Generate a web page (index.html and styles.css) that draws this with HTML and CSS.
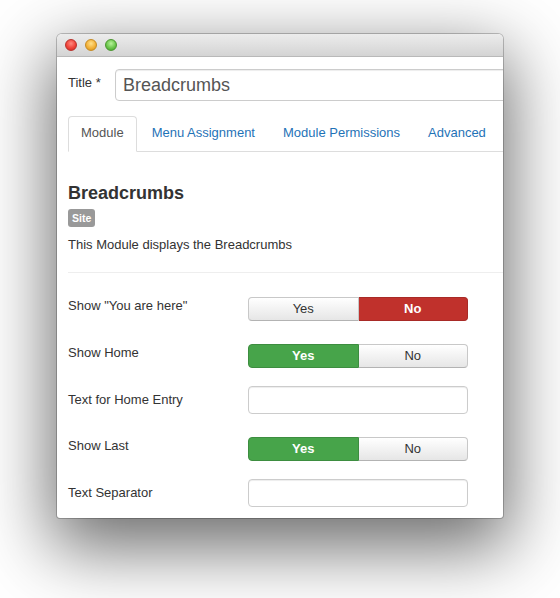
FILE: index.html
```html
<!DOCTYPE html>
<html>
<head>
<meta charset="utf-8">
<link rel="stylesheet" href="styles.css">
</head>
<body>
<div class="stage">
  <div class="window">
    <div class="titlebar">
      <span class="light red"></span>
      <span class="light yellow"></span>
      <span class="light green"></span>
    </div>
    <div class="content">
      <div class="title-row">
        <label class="title-label">Title *</label>
        <div class="title-input">Breadcrumbs</div>
      </div>
      <ul class="tabs">
        <li class="tab active">Module</li>
        <li class="tab">Menu Assignment</li>
        <li class="tab">Module Permissions</li>
        <li class="tab">Advanced</li>
      </ul>
      <div class="pane">
        <h3 class="heading">Breadcrumbs</h3>
        <div class="badge-wrap"><span class="badge">Site</span></div>
        <p class="desc">This Module displays the Breadcrumbs</p>
        <div class="rule"></div>
        <div class="form">
          <div class="row">
            <div class="label">Show "You are here"</div>
            <div class="btn-group">
              <span class="btn">Yes</span>
              <span class="btn btn-danger">No</span>
            </div>
          </div>
          <div class="row">
            <div class="label">Show Home</div>
            <div class="btn-group">
              <span class="btn btn-success">Yes</span>
              <span class="btn">No</span>
            </div>
          </div>
          <div class="row tight">
            <div class="label">Text for Home Entry</div>
            <div class="text-input"></div>
          </div>
          <div class="row">
            <div class="label">Show Last</div>
            <div class="btn-group">
              <span class="btn btn-success">Yes</span>
              <span class="btn">No</span>
            </div>
          </div>
          <div class="row">
            <div class="label">Text Separator</div>
            <div class="text-input"></div>
          </div>
        </div>
      </div>
    </div>
  </div>
</div>
</body>
</html>
```

FILE: styles.css
```css
html, body {
  margin: 0;
  padding: 0;
  background: #ffffff;
}
body {
  width: 560px;
  height: 598px;
  overflow: hidden;
  font-family: "Liberation Sans", Arial, sans-serif;
  font-size: 13px;
  color: #333333;
}
.stage {
  padding: 34px 0 0 57px;
}
.window {
  width: 446px;
  height: 484px;
  background: #ffffff;
  border-radius: 5px 5px 3px 3px;
  overflow: hidden;
  box-shadow: 0 24px 70px 6px rgba(0, 0, 0, 0.58), 0 0 0 1px rgba(0, 0, 0, 0.22);
}
.titlebar {
  height: 22px;
  border-bottom: 1px solid #b9b9b9;
  background: linear-gradient(#ececec, #d4d4d4);
  display: flex;
  align-items: center;
  gap: 8px;
  padding-left: 8px;
}
.light {
  width: 12px;
  height: 12px;
  border-radius: 50%;
  box-sizing: border-box;
}
.light.red {
  background: radial-gradient(circle at 50% 35%, #ff8a80 0%, #f0443a 55%, #c42a22 100%);
  border: 1px solid #b8302a;
}
.light.yellow {
  background: radial-gradient(circle at 50% 35%, #ffe08a 0%, #f3b23a 55%, #d08f18 100%);
  border: 1px solid #c58a22;
}
.light.green {
  background: radial-gradient(circle at 50% 35%, #b7f29a 0%, #6cc74c 55%, #3f9a28 100%);
  border: 1px solid #4a952f;
}
.content {
  padding: 12px 0 0 11px;
  width: 600px;
}
.title-row {
  display: flex;
  align-items: flex-start;
}
.title-label {
  width: 47px;
  padding-top: 5px;
  line-height: 18px;
  font-size: 13px;
  color: #333;
}
.title-input {
  width: 420px;
  height: 32px;
  box-sizing: border-box;
  border: 1px solid #cccccc;
  border-radius: 4px;
  box-shadow: inset 0 1px 1px rgba(0, 0, 0, 0.075);
  padding: 0 7px;
  font-size: 18px;
  line-height: 30px;
  color: #555555;
}
.tabs {
  list-style: none;
  margin: 15px 0 0 0;
  padding: 0;
  display: flex;
  border-bottom: 1px solid #dddddd;
}
.tab {
  padding: 7px 12px 9px;
  line-height: 18px;
  border: 1px solid transparent;
  border-radius: 4px 4px 0 0;
  margin-right: 2px;
  margin-bottom: -1px;
  color: #1f73b7;
}
.tab.active {
  color: #555555;
  border-color: #dddddd;
  border-bottom-color: #ffffff;
  background: #ffffff;
}
.pane {
  padding-top: 31px;
}
.heading {
  margin: 0;
  font-size: 18px;
  line-height: 20px;
  font-weight: bold;
  color: #333;
}
.badge-wrap {
  margin-top: 6px;
  display: flex;
}
.badge {
  background: #999999;
  color: #ffffff;
  font-size: 10.5px;
  font-weight: bold;
  line-height: 14px;
  padding: 2px 4px;
  border-radius: 3px;
}
.desc {
  margin: 9px 0 0 0;
  line-height: 18px;
}
.rule {
  margin-top: 18px;
  border-top: 1px solid #eeeeee;
  height: 0;
}
.form {
  padding-top: 18px;
}
.row {
  display: grid;
  grid-template-columns: 180px 220px;
  height: 28px;
  margin-bottom: 19px;
}
.row.tight {
  margin-bottom: 18px;
}
.label {
  padding-top: 6px;
  line-height: 18px;
}
.btn-group {
  margin-top: 6px;
  height: 24px;
  display: flex;
}
.btn {
  flex: 1;
  box-sizing: border-box;
  height: 24px;
  line-height: 22px;
  text-align: center;
  color: #333;
  background: linear-gradient(#ffffff, #e6e6e6);
  border: 1px solid #c8c8c8;
  border-bottom-color: #b3b3b3;
}
.btn:first-child {
  border-radius: 4px 0 0 4px;
}
.btn:last-child {
  border-radius: 0 4px 4px 0;
  border-left: none;
}
.btn-danger {
  background: #c0312c;
  border-color: #a82a26;
  color: #ffffff;
  font-weight: bold;
}
.btn-success {
  background: #47a44a;
  border-color: #3d8d40;
  color: #ffffff;
  font-weight: bold;
}
.text-input {
  margin-top: 1px;
  height: 28px;
  box-sizing: border-box;
  border: 1px solid #cccccc;
  border-radius: 4px;
  box-shadow: inset 0 1px 1px rgba(0, 0, 0, 0.075);
  background: #fff;
}
```
